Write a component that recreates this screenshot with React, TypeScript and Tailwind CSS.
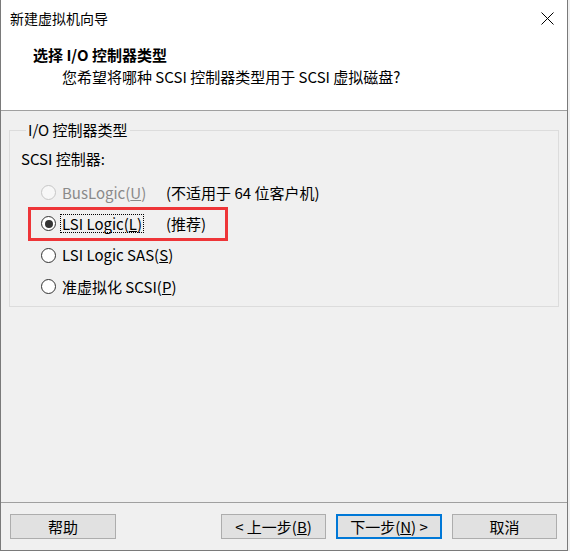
import React from 'react';

const font = "font-['Noto_Sans_CJK_SC','Noto_Sans',sans-serif]";

const Radio = ({ checked = false, disabled = false }: { checked?: boolean; disabled?: boolean }) => (
  <span
    className={`w-[15px] h-[15px] rounded-full border flex items-center justify-center shrink-0 ${
      disabled ? 'border-[#c6c6c6] bg-[#f7f7f7]' : 'border-[#333333] bg-white'
    }`}
  >
    {checked && <span className="w-[8px] h-[8px] rounded-full bg-[#333333]" />}
  </span>
);

const Btn = ({ children, primary = false, w }: { children: React.ReactNode; primary?: boolean; w: string }) => (
  <button
    className={`${w} h-[25px] bg-[#e1e1e1] text-[15px] leading-[20px] text-black flex items-center justify-center ${
      primary ? 'border-2 border-[#0078d7]' : 'border border-[#adadad]'
    }`}
  >
    {children}
  </button>
);

export default function App() {
  return (
    <div className={`relative w-[570px] h-[551px] bg-[#f0f0f0] ${font} text-black`}>
      <div className="w-[568px] h-[551px] border-l border-r border-b border-[#7a7a7a] flex flex-col">
        {/* header */}
        <div className="h-[111px] bg-white border-b border-[#a0a0a0] flex flex-col">
          <div className="flex items-start justify-between pl-[9px] pt-[8px]">
            <span className="text-[14px] leading-[20px]">新建虚拟机向导</span>
            <svg width="13" height="13" viewBox="0 0 13 13" className="mr-[13px] mt-[4px]">
              <path d="M0.5 0.5 L12.5 12.5 M12.5 0.5 L0.5 12.5" stroke="#000" strokeWidth="1" />
            </svg>
          </div>
          <div className="pl-[32px] mt-[17px] text-[15px] leading-[20px] font-bold">选择 I/O 控制器类型</div>
          <div className="pl-[61px] mt-[2px] text-[15px] leading-[20px]">您希望将哪种 SCSI 控制器类型用于 SCSI 虚拟磁盘?</div>
        </div>

        {/* body */}
        <div className="flex-1 pl-[8px] pt-[9px]">
          <fieldset className="w-[550px] h-[187px] border border-[#dcdcdc] pl-[11px] text-[15px] leading-[20px]">
            <legend className="ml-[5px] px-[2px]">I/O 控制器类型</legend>
            <div className="mt-[9px]">SCSI 控制器:</div>
            <div className="mt-[8px] ml-[20px] grid grid-cols-[125px_1fr]">
              <div className="h-[31px] flex items-center gap-[6px] text-[#8a8a8a]">
                <Radio disabled />
                <span>
                  BusLogic(<span className="underline">U</span>)
                </span>
              </div>
              <div className="h-[31px] flex items-center">(不适用于 64 位客户机)</div>
              <div className="h-[31px] flex items-center gap-[4px]">
                <Radio checked />
                <span className="border border-dotted border-black px-[1px] leading-[17px]">
                  LSI Logic(<span className="underline">L</span>)
                </span>
              </div>
              <div className="h-[31px] flex items-center">(推荐)</div>
              <div className="h-[32px] flex items-center gap-[6px] col-span-2">
                <Radio />
                <span>
                  LSI Logic SAS(<span className="underline">S</span>)
                </span>
              </div>
              <div className="h-[31px] flex items-center gap-[6px] col-span-2">
                <Radio />
                <span>
                  准虚拟化 SCSI(<span className="underline">P</span>)
                </span>
              </div>
            </div>
          </fieldset>
        </div>

        {/* footer */}
        <div className="h-[48px] border-t border-[#a0a0a0] flex items-start pt-[11px] pl-[9px]">
          <Btn w="w-[106px]">帮助</Btn>
          <div className="ml-[105px] flex gap-[10px]">
            <Btn w="w-[105px]">
              &lt; 上一步(<span className="underline">B</span>)
            </Btn>
            <Btn w="w-[106px]" primary>
              下一步(<span className="underline">N</span>) &gt;
            </Btn>
            <Btn w="w-[105px]">取消</Btn>
          </div>
        </div>
      </div>

      {/* annotation */}
      <div className="absolute left-[28px] top-[207px] w-[200px] h-[34px] border-[3px] border-[#ee3538] pointer-events-none" />
    </div>
  );
}
